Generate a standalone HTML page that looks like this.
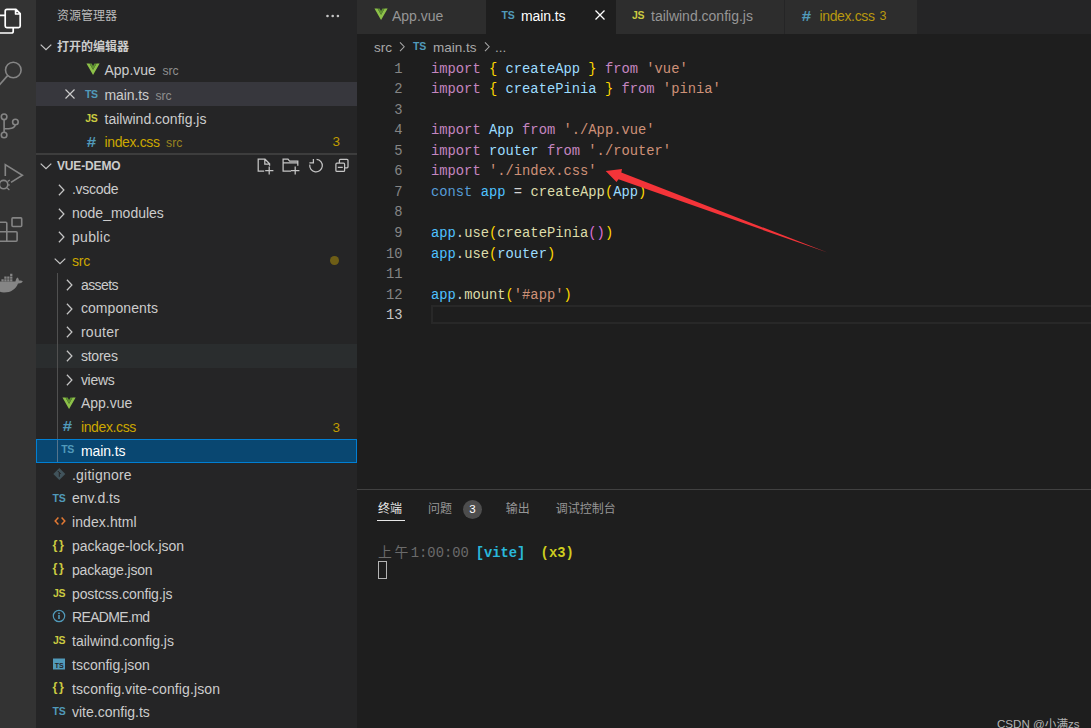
<!DOCTYPE html>
<html lang="zh-CN"><head><meta charset="utf-8"><title>main.ts - vue-demo</title>
<style>
html,body{margin:0;padding:0;background:#1e1e1e;}
body{width:1091px;height:728px;position:relative;overflow:hidden;font-family:"Liberation Sans","Noto Sans CJK SC",sans-serif;font-size:14px;color:#cccccc;}
.ab{position:absolute;display:block;}
.t{position:absolute;white-space:pre;line-height:24px;height:24px;}
.ic{font-weight:bold;font-size:10.5px;line-height:16px;height:16px;width:16px;text-align:center;letter-spacing:-0.3px;}
.dim{color:#8f8f8f;font-size:12.2px;}
.code{position:absolute;left:431px;white-space:pre;font-family:"Liberation Mono","DejaVu Sans Mono",monospace;font-size:13.8px;line-height:20.54px;height:20.54px;color:#d4d4d4;}
.ln{position:absolute;left:357px;width:45.5px;text-align:right;font-family:"Liberation Mono","DejaVu Sans Mono",monospace;font-size:13.8px;line-height:20.54px;height:20.54px;color:#858585;}
.k{color:#c586c0}.b{color:#ffd700}.v{color:#9cdcfe}.s{color:#ce9178}.f{color:#dcdcaa}.c{color:#569cd6}.p{color:#da70d6}.w{color:#4fc1ff}
.term{font-family:"Liberation Mono","Noto Sans CJK SC",monospace;font-size:13.8px;}
</style></head><body>

<div class="ab" style="left:0;top:0;width:36px;height:728px;background:#333333"></div>
<div class="ab" style="left:36px;top:0;width:321px;height:728px;background:#252526"></div>
<svg class="ab" style="left:0;top:0" width="36" height="320" viewBox="0 0 36 320">
<g fill="none" stroke="#ffffff" stroke-width="1.7" stroke-linejoin="round">
<path d="M7 9.3 H16 L20.2 13.6 V26 Q20.2 27.6 18.6 27.6 H6.8 Q5.2 27.6 5.2 26 V11 Q5.2 9.3 7 9.3 Z M15.6 9.6 V14 H20"/>
<path d="M5 15.4 H-4 V33 H11.5 Q13.2 33 13.2 31.4 V28"/>
</g>
<g fill="none" stroke="#858585" stroke-width="1.6">
<circle cx="13.3" cy="70" r="7.8"/><path d="M7.6 75.6 L-2 86.6"/>
<circle cx="4.1" cy="116.8" r="2.8"/><circle cx="4.1" cy="135" r="2.8"/><circle cx="15.4" cy="122" r="2.8"/>
<path d="M4.1 119.6 V132.2 M15.2 124.8 C14.5 128.6 10 128.7 4.1 128.7"/>
<path d="M5.3 176 V164.6 L22.4 175.3 L11 182.4"/>
<circle cx="3.6" cy="184.6" r="4.2"/>
<path d="M7.6 181.6 L9.8 180 M7.9 185 H10 M7.2 188 L9.4 190" stroke-width="1.2"/>
<path d="M12.9 217.9 H20.8 Q21.7 217.9 21.7 218.8 V225.6 Q21.7 226.5 20.8 226.5 H12.9 Q12 226.5 12 225.6 V218.8 Q12 217.9 12.9 217.9 Z"/>
<path d="M-3 222.3 H5.8 Q6.8 222.3 6.8 223.3 V241.2 M-3 231.8 H16.1 Q17.1 231.8 17.1 232.8 V240.2 Q17.1 241.2 16.1 241.2 H-3"/>
</g>
<path d="M-2 281.6 H15.4 C16 279 16.6 278 17.6 277.4 C18.6 278.4 19 279.6 18.8 280.6 C20.4 280.2 21.8 280.4 22.8 281.2 C22 282.8 20.2 283.6 18 283.4 C16 289 11 292.4 4 292.4 C-1 292.4 -4 290 -5 286 Z" fill="#858585"/>
<path d="M1.4 279.3 h2.3 v2.3 h-2.3z M4.3 279.3 h2.3 v2.3 h-2.3z M7.2 279.3 h2.3 v2.3 h-2.3z M10.1 279.3 h2.3 v2.3 h-2.3z M4.3 276.5 h2.3 v2.3 h-2.3z M7.2 276.5 h2.3 v2.3 h-2.3z M10.1 276.5 h2.3 v2.3 h-2.3z M10.1 273.7 h2.3 v2.3 h-2.3z" fill="#858585"/>
</svg>
<div class="t" style="left:57px;top:4px;font-size:12px;color:#bbbbbb">资源管理器</div>
<svg class="ab" style="left:324px;top:8px" width="18" height="16" viewBox="0 0 18 16"><circle cx="3.5" cy="8" r="1.3" fill="#c5c5c5"/><circle cx="8.7" cy="8" r="1.3" fill="#c5c5c5"/><circle cx="13.9" cy="8" r="1.3" fill="#c5c5c5"/></svg>
<svg class="ab" style="left:38px;top:39.00px" width="16" height="16" viewBox="0 0 16 16"><path d="M2.7 5.6 L8 10.6 L13.3 5.6" fill="none" stroke="#c5c5c5" stroke-width="1.25"/></svg>
<div class="t" style="left:57px;top:35px;font-size:12px;font-weight:bold;color:#cccccc">打开的编辑器</div>
<svg class="ab" style="left:85.5px;top:63.19px" width="14.1" height="12.5" viewBox="0 0 16 14" preserveAspectRatio="none"><path d="M0.5 0.5 H4 L8 7.5 L12 0.5 H15.5 L8 13.5 Z" fill="#8dc149"/><path d="M4 0.5 H6.4 L8 3.4 L9.6 0.5 H12 L8 7.5 Z" fill="#5f9430"/></svg>
<div class="t" style="left:104.5px;top:58.28px;color:#cccccc">App.vue<span class="dim" style="color:#8f8f8f;margin-left:6.5px;letter-spacing:0">src</span></div>
<div class="ab" style="left:36px;top:82.37px;width:321px;height:23.77px;background:#37373d"></div>
<svg class="ab" style="left:62px;top:86.26px" width="16" height="16" viewBox="0 0 16 16"><path d="M3.5 3.5 L12.5 12.5 M12.5 3.5 L3.5 12.5" stroke="#cccccc" stroke-width="1.15" fill="none"/></svg>
<span class="ab ic" style="left:83.3px;top:86.26px;color:#519aba">TS</span>
<div class="t" style="left:104.5px;top:82.76px;color:#cccccc;letter-spacing:-0.1px">main.ts<span class="dim" style="color:#8f8f8f;margin-left:6.5px;letter-spacing:0">src</span></div>
<span class="ab ic" style="left:83.3px;top:110.03px;color:#cbcb41">JS</span>
<div class="t" style="left:104.5px;top:106.53px;color:#cccccc">tailwind.config.js</div>
<span class="ab ic" style="left:82.7px;top:134.09px;color:#519aba;font-size:15px;font-style:italic;transform:scaleX(1.12)">#</span>
<div class="t" style="left:104.5px;top:130.29px;color:#cca700;letter-spacing:-0.37px">index.css<span class="dim" style="color:#9a8420;margin-left:6.5px;letter-spacing:0">src</span></div>
<div class="t" style="left:332.6px;top:130.09px;color:#c09c00;font-size:13.5px">3</div>
<div class="ab" style="left:36px;top:153.48px;width:321px;height:1.3px;background:#3d3d3d"></div>
<svg class="ab" style="left:38px;top:157.56px" width="16" height="16" viewBox="0 0 16 16"><path d="M2.7 5.6 L8 10.6 L13.3 5.6" fill="none" stroke="#c5c5c5" stroke-width="1.25"/></svg>
<div class="t" style="left:57px;top:153.56px;font-size:12px;font-weight:bold;color:#cccccc;letter-spacing:-0.16px">VUE-DEMO</div>
<svg class="ab" style="left:250px;top:155px" width="105" height="22" viewBox="250 155 105 22">
<g fill="none" stroke="#c5c5c5" stroke-width="1.25">
<path d="M264.2 171 H258.2 V159.2 H265 L269.6 163.8 V165.8 M264.8 159.4 V164 H269.4 M269.2 166.4 V174.4 M265.2 170.5 H273.4"/>
<path d="M291 171 H283.1 V159.2 H288 L289.6 161.2 H297.8 V165.8 M283.1 162.9 H297.8 M295.2 166.4 V174.4 M291 170.5 H299.4"/>
<path d="M316.6 159.3 A6.3 6.3 0 1 1 309.8 164.6 M313.4 159 V162.8 H309.4"/>
<path d="M336.9 163.2 H343.6 Q344.6 163.2 344.6 164.2 V170.4 Q344.6 171.4 343.6 171.4 H336.9 Q335.9 171.4 335.9 170.4 V164.2 Q335.9 163.2 336.9 163.2 Z M339.4 163 V160.4 Q339.4 159.4 340.4 159.4 H347 Q348 159.4 348 160.4 V166.8 Q348 167.8 347 167.8 H344.8 M337.8 167.3 H342.8"/>
</g></svg>
<svg class="ab" style="left:52.5px;top:181.74px" width="16" height="16" viewBox="0 0 16 16"><path d="M5.9 2.7 L10.9 8 L5.9 13.3" fill="none" stroke="#c5c5c5" stroke-width="1.25"/></svg>
<div class="t" style="left:72.0px;top:177.24px;color:#cccccc;letter-spacing:-0.3px">.vscode</div>
<svg class="ab" style="left:52.5px;top:205.51px" width="16" height="16" viewBox="0 0 16 16"><path d="M5.9 2.7 L10.9 8 L5.9 13.3" fill="none" stroke="#c5c5c5" stroke-width="1.25"/></svg>
<div class="t" style="left:72.0px;top:201.01px;color:#cccccc">node_modules</div>
<svg class="ab" style="left:52.5px;top:229.28px" width="16" height="16" viewBox="0 0 16 16"><path d="M5.9 2.7 L10.9 8 L5.9 13.3" fill="none" stroke="#c5c5c5" stroke-width="1.25"/></svg>
<div class="t" style="left:72.0px;top:224.97px;color:#cccccc;letter-spacing:0.33px">public</div>
<svg class="ab" style="left:52.2px;top:253.05px" width="16" height="16" viewBox="0 0 16 16"><path d="M2.7 5.6 L8 10.6 L13.3 5.6" fill="none" stroke="#c5c5c5" stroke-width="1.25"/></svg>
<div class="t" style="left:72.0px;top:248.75px;color:#cca700;letter-spacing:-0.2px">src</div>
<div class="ab" style="left:330.1px;top:255.95px;width:8.8px;height:8.8px;border-radius:50%;background:#6e5e16"></div>
<svg class="ab" style="left:60.7px;top:276.81px" width="16" height="16" viewBox="0 0 16 16"><path d="M5.9 2.7 L10.9 8 L5.9 13.3" fill="none" stroke="#c5c5c5" stroke-width="1.25"/></svg>
<div class="t" style="left:80.9px;top:272.52px;color:#cccccc;letter-spacing:-0.55px">assets</div>
<svg class="ab" style="left:60.7px;top:300.58px" width="16" height="16" viewBox="0 0 16 16"><path d="M5.9 2.7 L10.9 8 L5.9 13.3" fill="none" stroke="#c5c5c5" stroke-width="1.25"/></svg>
<div class="t" style="left:80.9px;top:296.29px;color:#cccccc;letter-spacing:0.08px">components</div>
<svg class="ab" style="left:60.7px;top:324.36px" width="16" height="16" viewBox="0 0 16 16"><path d="M5.9 2.7 L10.9 8 L5.9 13.3" fill="none" stroke="#c5c5c5" stroke-width="1.25"/></svg>
<div class="t" style="left:80.9px;top:320.06px;color:#cccccc;letter-spacing:0.3px">router</div>
<div class="ab" style="left:36px;top:343.84px;width:321px;height:23.77px;background:#2a2d2e"></div>
<svg class="ab" style="left:60.7px;top:348.12px" width="16" height="16" viewBox="0 0 16 16"><path d="M5.9 2.7 L10.9 8 L5.9 13.3" fill="none" stroke="#c5c5c5" stroke-width="1.25"/></svg>
<div class="t" style="left:80.9px;top:343.83px;color:#cccccc;letter-spacing:-0.22px">stores</div>
<svg class="ab" style="left:60.7px;top:371.89px" width="16" height="16" viewBox="0 0 16 16"><path d="M5.9 2.7 L10.9 8 L5.9 13.3" fill="none" stroke="#c5c5c5" stroke-width="1.25"/></svg>
<div class="t" style="left:80.9px;top:367.60px;color:#cccccc;letter-spacing:-0.3px">views</div>
<svg class="ab" style="left:61.800000000000004px;top:396.96px" width="14.1" height="12.5" viewBox="0 0 16 14" preserveAspectRatio="none"><path d="M0.5 0.5 H4 L8 7.5 L12 0.5 H15.5 L8 13.5 Z" fill="#8dc149"/><path d="M4 0.5 H6.4 L8 3.4 L9.6 0.5 H12 L8 7.5 Z" fill="#5f9430"/></svg>
<div class="t" style="left:80.9px;top:391.37px;color:#cccccc">App.vue</div>
<span class="ab ic" style="left:59.0px;top:417.94px;color:#519aba;font-size:15px;font-style:italic;transform:scaleX(1.12)">#</span>
<div class="t" style="left:80.9px;top:415.13px;color:#cca700;letter-spacing:-0.37px">index.css</div>
<div class="t" style="left:332.6px;top:415.73px;color:#c09c00;font-size:13.5px">3</div>
<div class="ab" style="left:36px;top:438.92px;width:319px;height:21.77px;background:#094771;border:1px solid #007fd4"></div>
<div class="ab" style="left:57px;top:439.92px;width:1px;height:21.77px;background:#55748c"></div>
<span class="ab ic" style="left:59.6px;top:441.40px;color:#519aba">TS</span>
<div class="t" style="left:80.9px;top:438.90px;color:#ffffff;letter-spacing:-0.1px">main.ts</div>
<svg class="ab" style="left:51px;top:465.78px" width="16" height="16" viewBox="0 0 16 16"><path d="M8.3 2 L14.3 8 L8.3 14 L2.3 8 Z" fill="#41535b"/><path d="M6.8 5 L9.8 8 M8.3 6.5 V10.8" stroke="#252526" stroke-width="1" fill="none"/></svg>
<div class="t" style="left:72.0px;top:462.68px;color:#cccccc;letter-spacing:0.22px">.gitignore</div>
<span class="ab ic" style="left:51px;top:489.55px;color:#519aba">TS</span>
<div class="t" style="left:72.0px;top:486.45px;color:#cccccc">env.d.ts</div>
<svg class="ab" style="left:51px;top:513.32px" width="16" height="16" viewBox="0 0 16 16"><path d="M7.4 4.6 L4.2 8 L7.4 11.4 M10.6 4.6 L13.8 8 L10.6 11.4" fill="none" stroke="#e37933" stroke-width="1.5"/></svg>
<div class="t" style="left:72.0px;top:510.22px;color:#cccccc;letter-spacing:0.1px">index.html</div>
<span class="ab ic" style="left:51px;top:536.59px;color:#cbcb41;font-size:12.5px;letter-spacing:1.6px">{}</span>
<div class="t" style="left:72.0px;top:533.99px;color:#cccccc">package-lock.json</div>
<span class="ab ic" style="left:51px;top:560.36px;color:#cbcb41;font-size:12.5px;letter-spacing:1.6px">{}</span>
<div class="t" style="left:72.0px;top:557.75px;color:#cccccc;letter-spacing:-0.17px">package.json</div>
<span class="ab ic" style="left:51px;top:584.62px;color:#cbcb41">JS</span>
<div class="t" style="left:72.0px;top:581.52px;color:#cccccc;letter-spacing:-0.14px">postcss.config.js</div>
<svg class="ab" style="left:51px;top:608.40px" width="16" height="16" viewBox="0 0 16 16"><circle cx="8" cy="8" r="5.7" fill="none" stroke="#519aba" stroke-width="1.2"/><rect x="7.2" y="7" width="1.6" height="4" fill="#519aba"/><rect x="7.2" y="4.6" width="1.6" height="1.5" fill="#519aba"/></svg>
<div class="t" style="left:72.0px;top:605.30px;color:#cccccc;letter-spacing:-0.64px">README.md</div>
<span class="ab ic" style="left:51px;top:632.17px;color:#cbcb41">JS</span>
<div class="t" style="left:72.0px;top:629.07px;color:#cccccc">tailwind.config.js</div>
<svg class="ab" style="left:51px;top:655.94px" width="16" height="16" viewBox="0 0 16 16"><rect x="2" y="2.5" width="12" height="11" fill="#519aba"/><text x="8.2" y="12.3" font-family="Liberation Sans, sans-serif" font-size="7" font-weight="bold" text-anchor="middle" fill="#252526">TS</text></svg>
<div class="t" style="left:72.0px;top:652.84px;color:#cccccc">tsconfig.json</div>
<span class="ab ic" style="left:51px;top:679.21px;color:#cbcb41;font-size:12.5px;letter-spacing:1.6px">{}</span>
<div class="t" style="left:72.0px;top:676.61px;color:#cccccc;letter-spacing:0.1px">tsconfig.vite-config.json</div>
<span class="ab ic" style="left:51px;top:703.48px;color:#519aba">TS</span>
<div class="t" style="left:72.0px;top:700.38px;color:#cccccc">vite.config.ts</div>
<div class="ab" style="left:57px;top:272.53px;width:1px;height:166.39px;background:#505050"></div>
<div class="ab" style="left:357px;top:0;width:734px;height:34.4px;background:#252526"></div>
<div class="ab" style="left:357px;top:0;width:129px;height:34.4px;background:#2d2d2d"></div>
<div class="ab" style="left:486px;top:0;width:129.70000000000005px;height:34.4px;background:#1e1e1e"></div>
<div class="ab" style="left:615.5px;top:0;width:168.5px;height:34.4px;background:#2d2d2d"></div>
<div class="ab" style="left:785px;top:0;width:131.5px;height:34.4px;background:#2d2d2d"></div>
<svg class="ab" style="left:373.8px;top:7.90px" width="14.1" height="12.5" viewBox="0 0 16 14" preserveAspectRatio="none"><path d="M0.5 0.5 H4 L8 7.5 L12 0.5 H15.5 L8 13.5 Z" fill="#8dc149"/><path d="M4 0.5 H6.4 L8 3.4 L9.6 0.5 H12 L8 7.5 Z" fill="#5f9430"/></svg>
<div class="t" style="left:392px;top:3.6px;color:#969696">App.vue</div>
<span class="ab ic" style="left:500px;top:7.20px;color:#519aba">TS</span>
<div class="t" style="left:521px;top:3.6px;color:#ffffff;letter-spacing:-0.1px">main.ts</div>
<span class="ab ic" style="left:630px;top:7.20px;color:#cbcb41">JS</span>
<div class="t" style="left:651px;top:3.6px;color:#969696">tailwind.config.js</div>
<span class="ab ic" style="left:798.4px;top:7.50px;color:#519aba;font-size:15px;font-style:italic;transform:scaleX(1.12)">#</span>
<div class="t" style="left:819.5px;top:3.6px;color:#b8980f;letter-spacing:-0.37px">index.css</div>
<div class="t" style="left:879.5px;top:3.6px;color:#b8980f;font-size:12.5px">3</div>
<svg class="ab" style="left:592px;top:7.2px" width="16" height="16" viewBox="0 0 16 16"><path d="M3.5 3.5 L12.5 12.5 M12.5 3.5 L3.5 12.5" stroke="#ffffff" stroke-width="1.3" fill="none"/></svg>
<div class="t" style="left:374px;top:35.5px;color:#a9a9a9;font-size:13.5px">src</div>
<svg class="ab" style="left:394.5px;top:40.45px" width="13.5" height="13.5" viewBox="0 0 16 16"><path d="M5.9 2.7 L10.9 8 L5.9 13.3" fill="none" stroke="#a9a9a9" stroke-width="1.25"/></svg>
<span class="ab ic" style="left:411.5px;top:37.80px;color:#519aba">TS</span>
<div class="t" style="left:433px;top:35.5px;color:#a9a9a9;font-size:13.5px">main.ts</div>
<svg class="ab" style="left:479.5px;top:40.45px" width="13.5" height="13.5" viewBox="0 0 16 16"><path d="M5.9 2.7 L10.9 8 L5.9 13.3" fill="none" stroke="#a9a9a9" stroke-width="1.25"/></svg>
<div class="t" style="left:495px;top:35.5px;color:#a9a9a9;font-size:13.5px">...</div>
<div class="ln" style="top:59.70px;color:#858585">1</div>
<div class="code" style="top:59.70px"><span class="k">import</span> <span class="b">{</span> <span class="v">createApp</span> <span class="b">}</span> <span class="k">from</span> <span class="s">'vue'</span></div>
<div class="ln" style="top:80.24px;color:#858585">2</div>
<div class="code" style="top:80.24px"><span class="k">import</span> <span class="b">{</span> <span class="v">createPinia</span> <span class="b">}</span> <span class="k">from</span> <span class="s">'pinia'</span></div>
<div class="ln" style="top:100.78px;color:#858585">3</div>
<div class="ln" style="top:121.32px;color:#858585">4</div>
<div class="code" style="top:121.32px"><span class="k">import</span> <span class="v">App</span> <span class="k">from</span> <span class="s">'./App.vue'</span></div>
<div class="ln" style="top:141.86px;color:#858585">5</div>
<div class="code" style="top:141.86px"><span class="k">import</span> <span class="v">router</span> <span class="k">from</span> <span class="s">'./router'</span></div>
<div class="ln" style="top:162.40px;color:#858585">6</div>
<div class="code" style="top:162.40px"><span class="k">import</span> <span class="s">'./index.css'</span></div>
<div class="ln" style="top:182.94px;color:#858585">7</div>
<div class="code" style="top:182.94px"><span class="c">const</span> <span class="w">app</span> = <span class="f">createApp</span><span class="b">(</span><span class="v">App</span><span class="b">)</span></div>
<div class="ln" style="top:203.48px;color:#858585">8</div>
<div class="ln" style="top:224.02px;color:#858585">9</div>
<div class="code" style="top:224.02px"><span class="w">app</span>.<span class="f">use</span><span class="b">(</span><span class="f">createPinia</span><span class="p">()</span><span class="b">)</span></div>
<div class="ln" style="top:244.56px;color:#858585">10</div>
<div class="code" style="top:244.56px"><span class="w">app</span>.<span class="f">use</span><span class="b">(</span><span class="v">router</span><span class="b">)</span></div>
<div class="ln" style="top:265.10px;color:#858585">11</div>
<div class="ln" style="top:285.64px;color:#858585">12</div>
<div class="code" style="top:285.64px"><span class="w">app</span>.<span class="f">mount</span><span class="b">(</span><span class="s">'#app'</span><span class="b">)</span></div>
<div class="ab" style="left:431.2px;top:305.1px;width:660px;height:15.2px;border:2px solid #282828;border-right:0"></div>
<div class="ln" style="top:306.18px;color:#c6c6c6">13</div>
<svg class="ab" style="left:590px;top:150px" width="260" height="120" viewBox="590 150 260 120"><path d="M605.7 171 L622 169 L621.3 172.4 L827.5 252.6 L618.5 179.3 L616.5 182 Z" fill="#f43439"/></svg>
<div class="ab" style="left:357px;top:489px;width:734px;height:1px;background:#414141"></div>
<div class="t" style="left:378px;top:497px;font-size:12px;color:#e7e7e7">终端</div>
<div class="ab" style="left:376.8px;top:519.6px;width:28.4px;height:1px;background:#e7e7e7"></div>
<div class="t" style="left:428px;top:497px;font-size:12px;color:#969696">问题</div>
<div class="ab" style="left:463px;top:499.5px;width:19px;height:19px;border-radius:50%;background:#4d4d4d"></div>
<div class="t" style="left:463px;top:497px;width:19px;text-align:center;font-size:11.5px;color:#ffffff">3</div>
<div class="t" style="left:505.8px;top:497px;font-size:12px;color:#969696">输出</div>
<div class="t" style="left:555.8px;top:497px;font-size:12px;color:#969696">调试控制台</div>
<div class="t term" style="left:378px;top:542.1px;color:#6b6b6b"><span style="letter-spacing:2.6px">上午</span>1:00:00 <span style="color:#29b8db;font-weight:bold;margin-left:-1.4px">[vite]</span>  <span style="color:#cdcd1f;font-weight:bold;margin-left:-1.3px">(x3)</span></div>
<div class="ab" style="left:378.4px;top:561px;width:6.4px;height:15.6px;border:1px solid #b4b4b4"></div>
<div class="t" style="left:997px;top:711.5px;font-size:11.6px;color:#b4b4b4">CSDN @小满zs</div>
</body></html>
